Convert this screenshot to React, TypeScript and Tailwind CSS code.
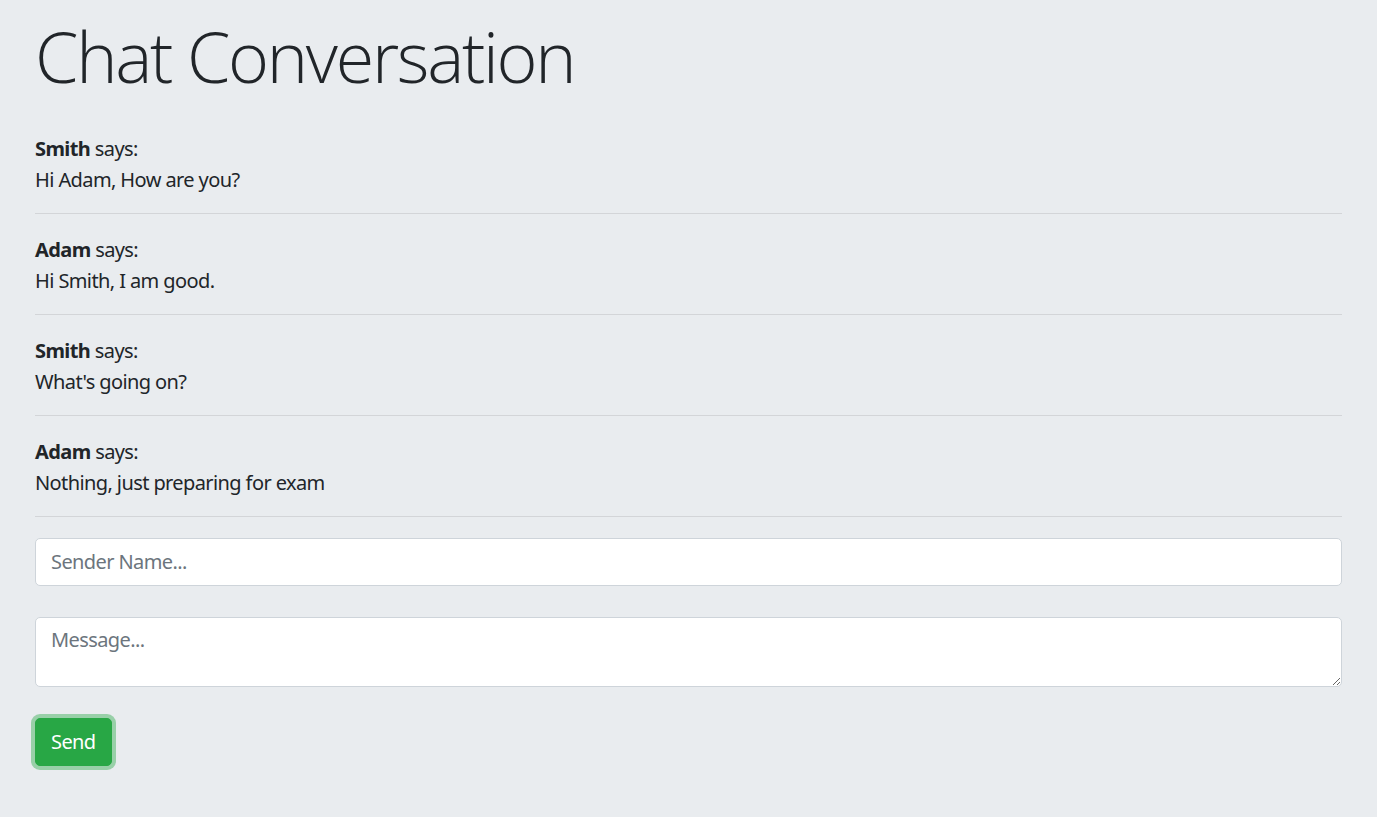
import React from "react";

const messages = [
  { name: "Smith", text: "Hi Adam, How are you?" },
  { name: "Adam", text: "Hi Smith, I am good." },
  { name: "Smith", text: "What's going on?" },
  { name: "Adam", text: "Nothing, just preparing for exam" },
];

export default function App() {
  return (
    <div
      className="min-h-[817px] bg-[#e9ecef] px-[35px] pt-[14px] text-[#212529] tracking-[-0.6px]"
      style={{ fontFamily: '"Segoe UI", "Noto Sans", "Open Sans", sans-serif' }}
    >
      <h1
        className="text-[70px] font-light leading-[84px] tracking-[-2.3px]"
        style={{ fontFamily: '"Open Sans", "Noto Sans", sans-serif' }}
      >
        Chat Conversation
      </h1>
      <div className="mt-[36px] text-[20px] leading-[30px]">
        {messages.map((m, i) => (
          <div key={i}>
            <div>
              <strong className="font-bold">{m.name}</strong> says:
            </div>
            <div className="mt-px">{m.text}</div>
            <hr className="mb-[21px] mt-[18px] border-0 border-t border-t-[#d3d5d8]" />
          </div>
        ))}
      </div>
      <div>
        <input
          type="text"
          placeholder="Sender Name..."
          className="block h-[47.5px] w-full rounded-[5px] border border-[#ced4da] bg-white px-[15px] text-[20px] tracking-[-0.6px] text-[#495057] outline-none placeholder:text-[#6c757d]"
        />
        <textarea
          placeholder="Message..."
          className="mt-[31px] block h-[70px] w-full rounded-[5px] border border-[#ced4da] bg-white px-[15px] py-[7px] text-[20px] leading-[30px] tracking-[-0.6px] text-[#495057] outline-none placeholder:text-[#6c757d]"
        />
        <button className="mt-[31px] h-[48px] rounded-[5px] border border-[#28a745] bg-[#28a745] px-[15px] text-[20px] leading-[30px] tracking-[-0.6px] text-white shadow-[0_0_0_4px_rgba(72,180,97,0.5)]">
          Send
        </button>
      </div>
    </div>
  );
}
